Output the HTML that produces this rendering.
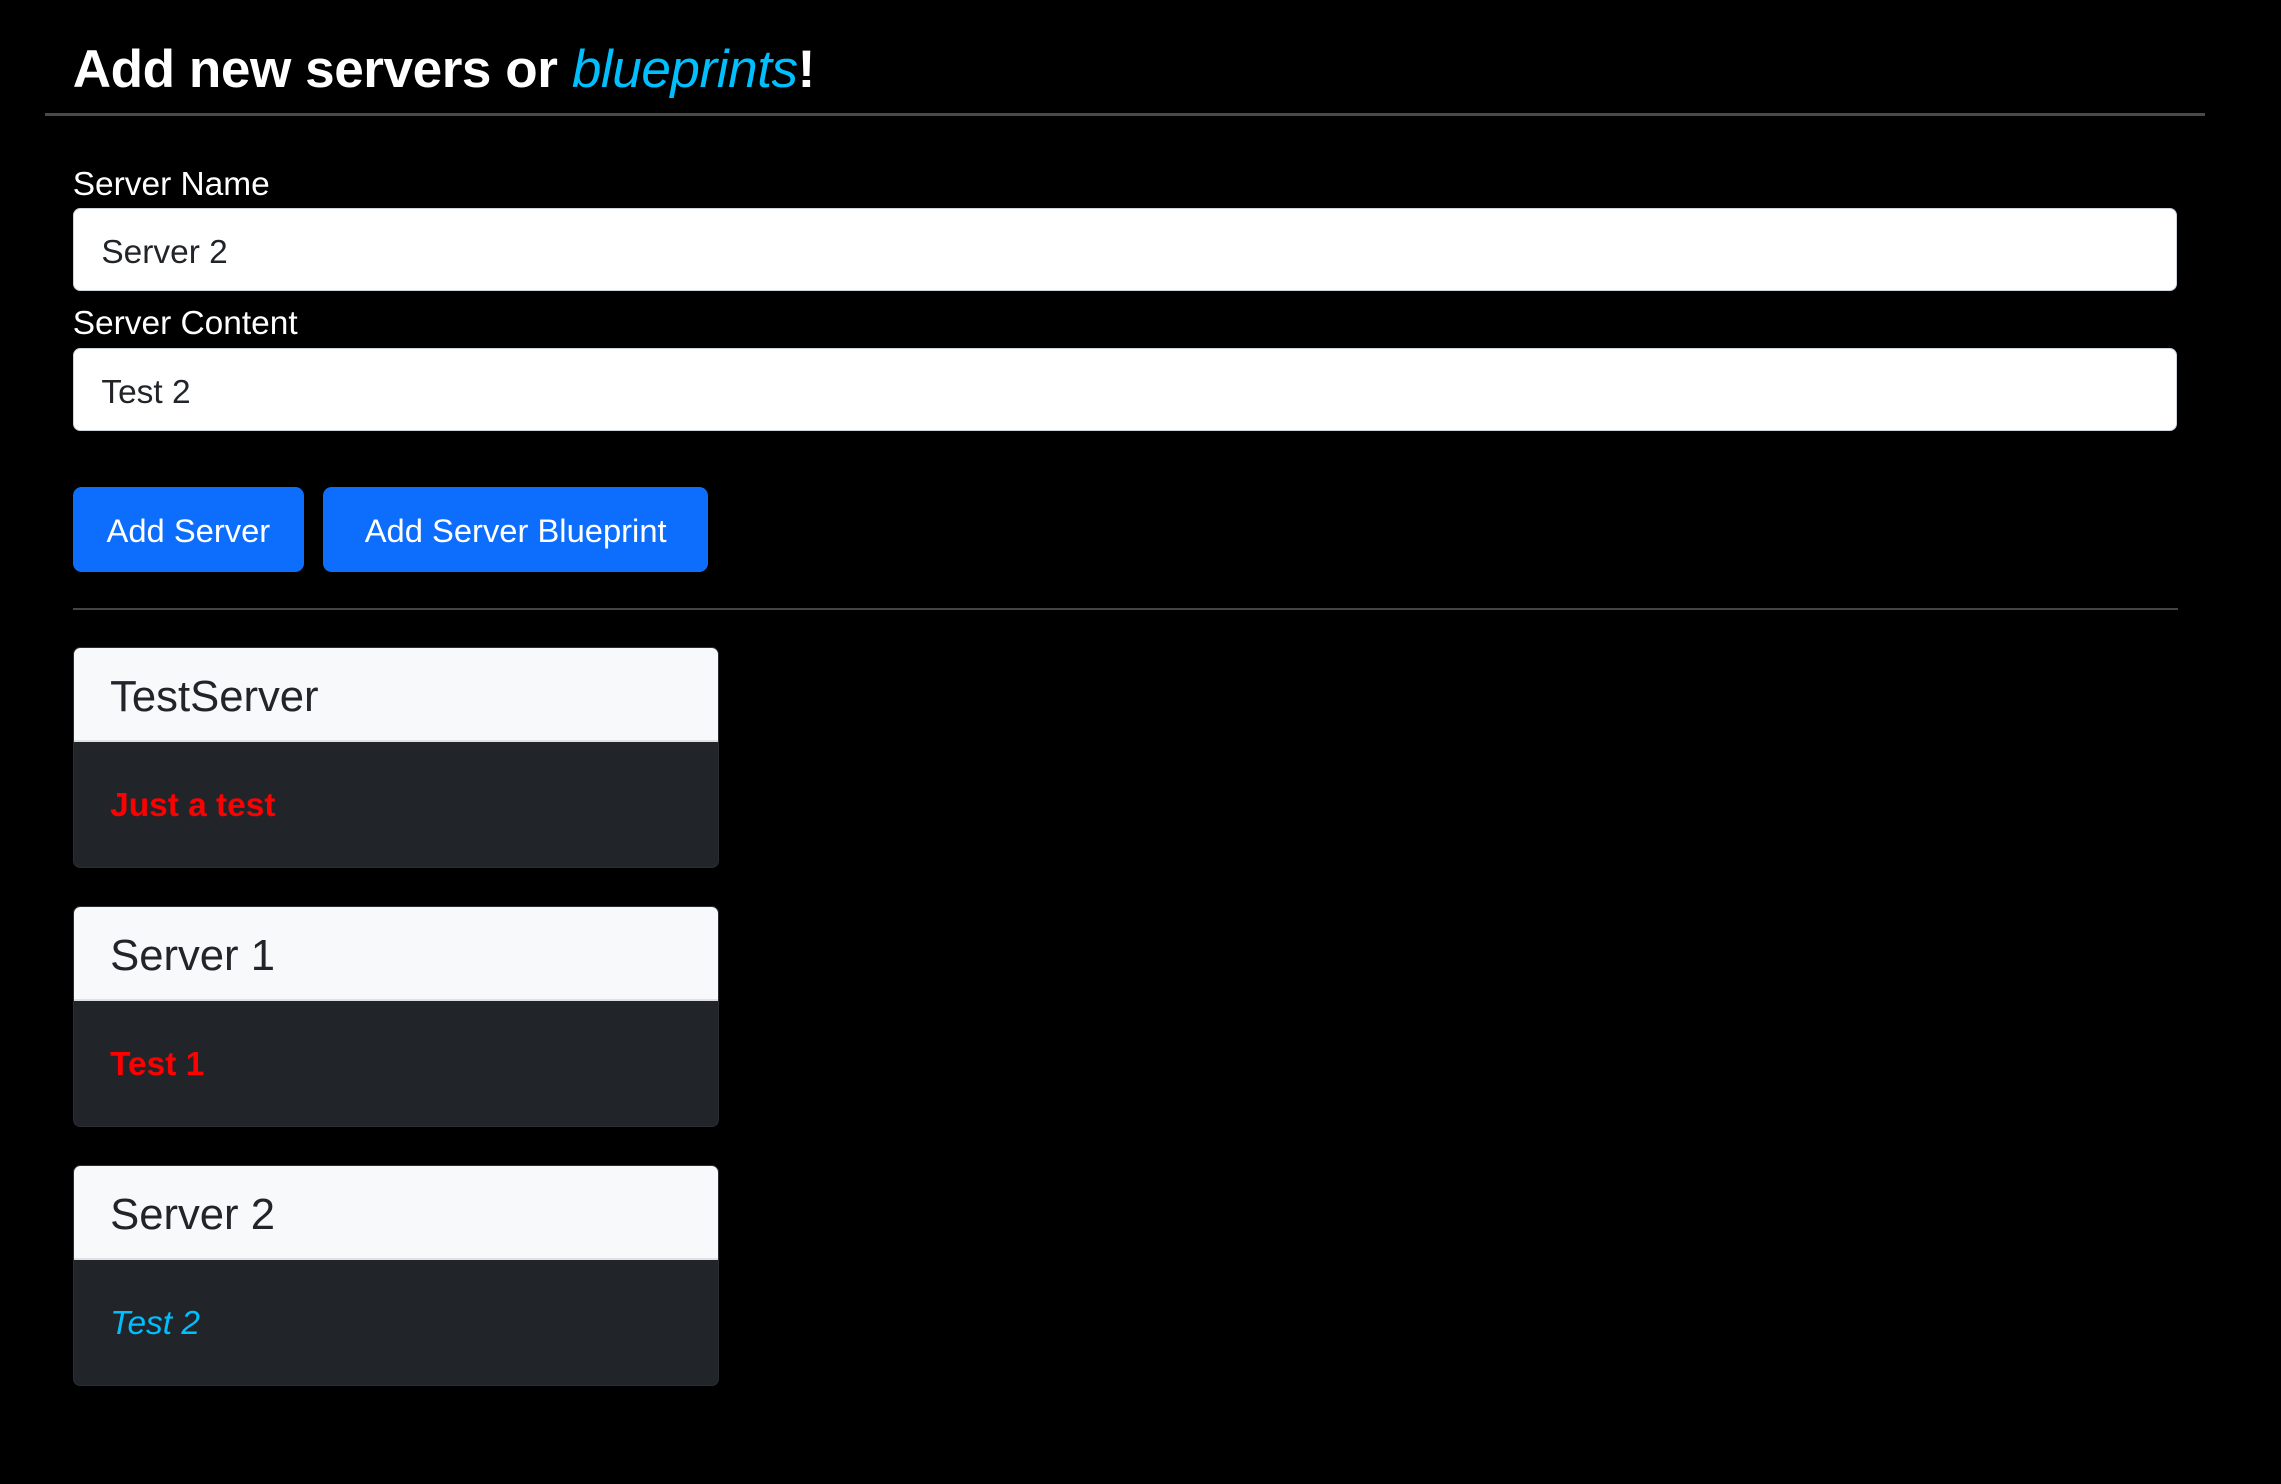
<!DOCTYPE html>
<html><head><meta charset="utf-8"><style>
html,body{margin:0;padding:0;background:#000;}
body{width:2281px;height:1484px;overflow:hidden;font-family:"Liberation Sans",sans-serif;}
#w{zoom:1.4547;position:relative;width:1568px;height:1020px;}
.a{position:absolute;}
h1{position:absolute;left:50px;top:26px;margin:0;font-size:36.5px;font-weight:bold;color:#fff;letter-spacing:-0.3px;line-height:44px;}
h1 i{color:#00bfff;font-weight:normal;}
.hr1{left:31px;top:78px;width:1485px;height:2px;background:#4a4a4a;}
.hr2{left:50px;top:418px;width:1447px;height:1px;background:#444;}
.lbl{left:50px;color:#fff;font-size:23px;line-height:26px;}
.inp{left:50px;width:1445px;height:56px;background:#fff;border:1px solid #ced4da;border-radius:5px;color:#212529;font-size:23px;line-height:60px;text-indent:19px;}
.btn{top:335px;height:58px;background:#0d6efd;border-radius:6px;color:#fff;font-size:22.5px;line-height:61px;text-align:center;}
.card{left:50px;width:444px;height:152px;border-radius:5px;overflow:hidden;background:#212529;border:1px solid #2a2e33;box-sizing:border-box;}
.ch{height:63px;background:#f8f9fa;border-bottom:2px solid #dee2e6;color:#212529;font-size:30px;line-height:68px;padding-left:25px;}
.cb{padding-left:25px;font-size:23px;line-height:88px;}
.red{color:#f00;font-weight:bold;}
.blue{color:#00bfff;font-style:italic;}
</style></head><body><div id="w">
<h1>Add new servers or <i>blueprints</i>!</h1>
<div class="a hr1"></div>
<div class="a lbl" style="top:114px">Server Name</div>
<div class="a inp" style="top:143px">Server 2</div>
<div class="a lbl" style="top:210px">Server Content</div>
<div class="a inp" style="top:239px">Test 2</div>
<div class="a btn" style="left:50px;width:159px">Add Server</div>
<div class="a btn" style="left:222px;width:265px">Add Server Blueprint</div>
<div class="a hr2"></div>
<div class="a card" style="top:445px"><div class="ch">TestServer</div><div class="cb red">Just a test</div></div>
<div class="a card" style="top:623px"><div class="ch">Server 1</div><div class="cb red">Test 1</div></div>
<div class="a card" style="top:801px"><div class="ch">Server 2</div><div class="cb blue">Test 2</div></div>
</div></body></html>
